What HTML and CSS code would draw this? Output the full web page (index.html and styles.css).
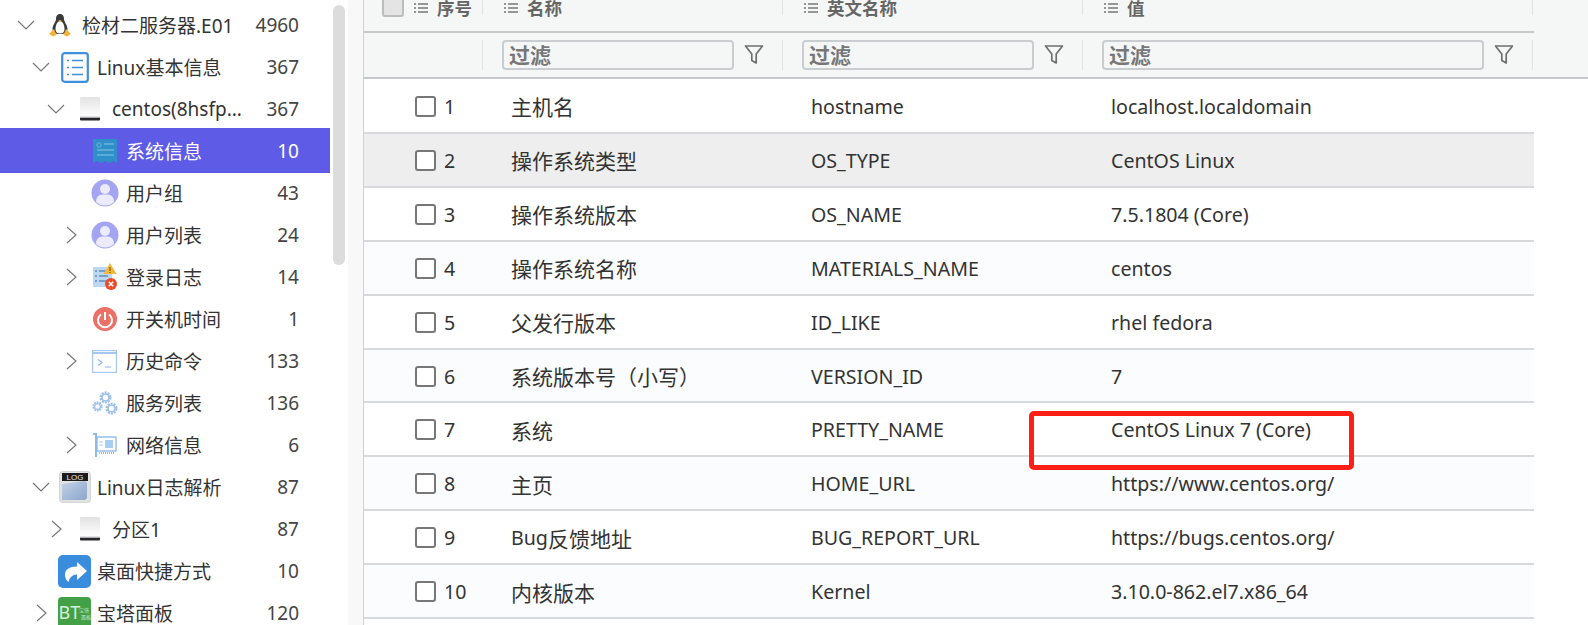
FILE: index.html
```html
<!DOCTYPE html>
<html>
<head>
<title>系统信息</title>
<link rel="stylesheet" href="styles.css">
</head>
<body>
<svg class="sprite" width="0" height="0">
  <defs>
    <linearGradient id="diskFace" x1="0" y1="0" x2="0" y2="1">
      <stop offset="0" stop-color="#e2e2e2"/>
      <stop offset="0.7" stop-color="#f8f8f8"/>
      <stop offset="1" stop-color="#ffffff"/>
    </linearGradient>
    <linearGradient id="logFolder" x1="0" y1="0" x2="1" y2="1">
      <stop offset="0" stop-color="#c3d2e8"/>
      <stop offset="1" stop-color="#8ca6cc"/>
    </linearGradient>
    <symbol id="i-disk" viewBox="0 0 22 24">
      <path d="M2 0h18l1 1v20H1V1z" fill="url(#diskFace)"/>
      <path d="M1 20.500h20v2q0 1-1 1H2q-1 0-1-1z" fill="#26262b"/>
      <path d="M1 19.500h20v1H1z" fill="#c9c9cf"/>
    </symbol>
    <symbol id="i-user" viewBox="0 0 28 28">
      <circle cx="14" cy="14" r="13.500" fill="#a3a5f2"/>
      <circle cx="14" cy="10" r="5" fill="#ebebfb"/>
      <path d="M5 23q0-7 6-7.500h6q6 .5 6 7.500q-4 3.500-9 3.500t-9-3.500z" fill="#ebebfb"/>
    </symbol>
    <symbol id="i-chev-d" viewBox="0 0 18 10">
      <path d="M1 1l8 8 8-8" fill="none" stroke="#777" stroke-width="1.200"/>
    </symbol>
    <symbol id="i-chev-r" viewBox="0 0 11 18">
      <path d="M1 1l9 8-9 8" fill="none" stroke="#777" stroke-width="1.200"/>
    </symbol>
    <symbol id="i-funnel" viewBox="0 0 20 22">
      <path d="M1.500 2h17l-6.300 8v9l-4.400-2.500V10z" fill="none" stroke="#6f6f6f" stroke-width="1.700" stroke-linejoin="round"/>
    </symbol>
    <symbol id="i-lines" viewBox="0 0 14 10">
      <path d="M0 1h2M4 1h10M0 5h2M4 5h10M0 9h2M4 9h10" stroke="#777" stroke-width="1.400"/>
    </symbol>
    <symbol id="i-gear" viewBox="0 0 14 14">
      <circle cx="7" cy="7" r="5.200" fill="none" stroke="currentColor" stroke-width="2.600" stroke-dasharray="2.200 1.070"/>
      <circle cx="7" cy="7" r="3.600" fill="none" stroke="currentColor" stroke-width="1.500"/>
    </symbol>
  </defs>
</svg>

<div class="app">
  <div class="tree">
    <div class="tree-row lv0">
      <span class="twist"><svg class="chev-d"><use href="#i-chev-d"/></svg></span>
      <span class="node-icon">
        <svg width="22" height="24" viewBox="0 0 22 24">
          <path d="M11 1c-3 0-4 2.500-4 5 0 3-3.500 6-3.500 10 0 3 2 5 7.500 5s7.500-2 7.500-5c0-4-3.500-7-3.500-10 0-2.500-1-5-4-5z" fill="#3a3a3a"/>
          <path d="M11 8c-2.500 0-4.500 4-4.500 8 0 3 1.500 4.500 4.500 4.500s4.500-1.500 4.500-4.500c0-4-2-8-4.500-8z" fill="#fff"/>
          <path d="M9.300 7.200h3.400L11 9.200z" fill="#f5b335"/>
          <path d="M0 21l5-5 2.500 6-3.500 1.500zM22 21l-5-5-2.500 6 3.500 1.500z" fill="#f5b335"/>
        </svg>
      </span>
      <span class="label">检材二服务器.E01</span>
      <span class="count">4960</span>
    </div>
    <div class="tree-row lv1">
      <span class="twist"><svg class="chev-d"><use href="#i-chev-d"/></svg></span>
      <span class="node-icon">
        <svg width="28" height="31" viewBox="0 0 28 31">
          <rect x="1.200" y="1.200" width="25.600" height="28.600" rx="2.500" fill="#fff" stroke="#3f8fdc" stroke-width="2.200"/>
          <path d="M6 8.500h2M11 8.500h11M6 15.500h2M11 15.500h11M6 22.500h2M11 22.500h11" stroke="#3f8fdc" stroke-width="1.600"/>
        </svg>
      </span>
      <span class="label">Linux基本信息</span>
      <span class="count">367</span>
    </div>
    <div class="tree-row lv2">
      <span class="twist"><svg class="chev-d"><use href="#i-chev-d"/></svg></span>
      <span class="node-icon"><svg width="22" height="24"><use href="#i-disk"/></svg></span>
      <span class="label">centos(8hsfp...</span>
      <span class="count">367</span>
    </div>
    <div class="tree-row lv3 active">
      <span class="twist"></span>
      <span class="node-icon">
        <svg width="24" height="24" viewBox="0 0 24 24">
          <path d="M0 0h24v24l-4-2-4 2-4-2-4 2-4-2-4 2z" fill="#2f8fc9"/>
          <circle cx="6" cy="6" r="2.200" fill="none" stroke="#6fb4dc" stroke-width="1"/>
          <path d="M11 5h10M4 11h17M4 16h17" stroke="#6fb4dc" stroke-width="1.400"/>
        </svg>
      </span>
      <span class="label">系统信息</span>
      <span class="count">10</span>
    </div>
    <div class="tree-row lv3">
      <span class="twist"></span>
      <span class="node-icon"><svg width="28" height="28"><use href="#i-user"/></svg></span>
      <span class="label">用户组</span>
      <span class="count">43</span>
    </div>
    <div class="tree-row lv3">
      <span class="twist"><svg class="chev-r"><use href="#i-chev-r"/></svg></span>
      <span class="node-icon"><svg width="28" height="28"><use href="#i-user"/></svg></span>
      <span class="label">用户列表</span>
      <span class="count">24</span>
    </div>
    <div class="tree-row lv3">
      <span class="twist"><svg class="chev-r"><use href="#i-chev-r"/></svg></span>
      <span class="node-icon">
        <svg width="26" height="28" viewBox="0 0 26 28">
          <rect x="1" y="4" width="19" height="20" fill="#bcd8f3"/>
          <path d="M3 8h2M7 8h11M3 13h2M7 13h9M3 18h2M7 18h8" stroke="#5d8fc4" stroke-width="1.400"/>
          <path d="M18 0l6.500 11h-13z" fill="#f6b73c"/>
          <path d="M18 4v4M18 9v1" stroke="#7a5a10" stroke-width="1.200"/>
          <circle cx="19" cy="21" r="6" fill="#ea4a2a"/>
          <path d="M16.800 18.800l4.400 4.400M21.200 18.800l-4.400 4.400" stroke="#fff" stroke-width="1.500"/>
        </svg>
      </span>
      <span class="label">登录日志</span>
      <span class="count">14</span>
    </div>
    <div class="tree-row lv3">
      <span class="twist"></span>
      <span class="node-icon">
        <svg width="24" height="24" viewBox="0 0 24 24">
          <circle cx="12" cy="12" r="12" fill="#ec6f68"/>
          <path d="M8 7.500a7 7 0 1 0 8 0" fill="none" stroke="#fff" stroke-width="2"/>
          <path d="M12 5v8" stroke="#fff" stroke-width="2"/>
        </svg>
      </span>
      <span class="label">开关机时间</span>
      <span class="count">1</span>
    </div>
    <div class="tree-row lv3">
      <span class="twist"><svg class="chev-r"><use href="#i-chev-r"/></svg></span>
      <span class="node-icon">
        <svg width="25" height="23" viewBox="0 0 25 23">
          <rect x="0.600" y="0.600" width="23.800" height="21.800" fill="#fff" stroke="#a6c8ee" stroke-width="1.200"/>
          <path d="M0 3h25" stroke="#a6c8ee" stroke-width="2"/>
          <path d="M6 9.500l4 3-4 3M13 17h6" fill="none" stroke="#8db8e8" stroke-width="1.200"/>
        </svg>
      </span>
      <span class="label">历史命令</span>
      <span class="count">133</span>
    </div>
    <div class="tree-row lv3">
      <span class="twist"></span>
      <span class="node-icon">
        <svg class="gears" width="26" height="25" viewBox="0 0 26 25">
          <use href="#i-gear" x="7" y="0" width="13" height="13"/>
          <use href="#i-gear" x="0" y="10" width="11" height="11"/>
          <use href="#i-gear" x="13" y="11" width="13" height="13"/>
        </svg>
      </span>
      <span class="label">服务列表</span>
      <span class="count">136</span>
    </div>
    <div class="tree-row lv3">
      <span class="twist"><svg class="chev-r"><use href="#i-chev-r"/></svg></span>
      <span class="node-icon">
        <svg width="25" height="25" viewBox="0 0 25 25">
          <path d="M1 1h3v23" fill="none" stroke="#8dbcea" stroke-width="2"/>
          <rect x="5" y="4" width="19" height="14" fill="#fff" stroke="#8dbcea" stroke-width="1.400"/>
          <rect x="13" y="7" width="8" height="8" fill="#a9cdf0"/>
          <path d="M7 9h4M7 12h4" stroke="#a9cdf0" stroke-width="1.200"/>
          <path d="M7 20h15" stroke="#8dbcea" stroke-width="2" stroke-dasharray="1 1"/>
        </svg>
      </span>
      <span class="label">网络信息</span>
      <span class="count">6</span>
    </div>
    <div class="tree-row lv1">
      <span class="twist"><svg class="chev-d"><use href="#i-chev-d"/></svg></span>
      <span class="node-icon">
        <svg width="32" height="32" viewBox="0 0 32 32">
          <rect x="0.500" y="0.500" width="31" height="31" rx="3" fill="#e2e2e2" stroke="#d4d4d4"/>
          <rect x="3" y="2" width="26" height="8" fill="#1c1c1c"/>
          <text x="16" y="9" class="log-text">LOG</text>
          <path d="M3 13l23-3 2 2v15l-2 2H3z" fill="url(#logFolder)"/>
        </svg>
      </span>
      <span class="label">Linux日志解析</span>
      <span class="count">87</span>
    </div>
    <div class="tree-row lv2">
      <span class="twist"><svg class="chev-r"><use href="#i-chev-r"/></svg></span>
      <span class="node-icon"><svg width="22" height="24"><use href="#i-disk"/></svg></span>
      <span class="label">分区1</span>
      <span class="count">87</span>
    </div>
    <div class="tree-row lv1">
      <span class="twist"></span>
      <span class="node-icon">
        <svg width="33" height="33" viewBox="0 0 33 33">
          <rect width="33" height="33" rx="5" fill="#3a8cdc"/>
          <path d="M19 7l10 9-10 9v-5.500c-4 0-7 2-8.500 7.500-2.500-2-3.500-4.500-3.500-7.500 0-5 4.500-8 12-8z" fill="#fff"/>
        </svg>
      </span>
      <span class="label">桌面快捷方式</span>
      <span class="count">10</span>
    </div>
    <div class="tree-row lv1">
      <span class="twist"><svg class="chev-r"><use href="#i-chev-r"/></svg></span>
      <span class="node-icon">
        <svg width="33" height="33" viewBox="0 0 33 33">
          <rect width="33" height="33" rx="4" fill="#43a047"/>
          <text x="0.500" y="22" class="bt-text">BT</text>
          <text x="21" y="15" class="bt-small">宝塔</text>
          <text x="23" y="22" class="bt-small">面板</text>
        </svg>
      </span>
      <span class="label">宝塔面板</span>
      <span class="count">120</span>
    </div>
    <div class="scroll-thumb"></div>
  </div>

  <div class="gutter"></div>

  <div class="grid">
    <div class="grid-head">
      <div class="col head-cell first">
        <span class="check check-head"></span>
        <svg class="lines"><use href="#i-lines"/></svg>
        <span>序号</span>
      </div>
      <div class="col head-cell"><svg class="lines"><use href="#i-lines"/></svg><span>名称</span></div>
      <div class="col head-cell"><svg class="lines"><use href="#i-lines"/></svg><span>英文名称</span></div>
      <div class="col head-cell"><svg class="lines"><use href="#i-lines"/></svg><span>值</span></div>
    </div>
    <div class="grid-filter">
      <div class="col filter-cell first"></div>
      <div class="col filter-cell">
        <div class="filter-box">过滤</div>
        <svg class="funnel"><use href="#i-funnel"/></svg>
      </div>
      <div class="col filter-cell">
        <div class="filter-box">过滤</div>
        <svg class="funnel"><use href="#i-funnel"/></svg>
      </div>
      <div class="col filter-cell">
        <div class="filter-box">过滤</div>
        <svg class="funnel"><use href="#i-funnel"/></svg>
      </div>
    </div>

    <div class="grid-row first-row">
      <div class="cell num"><span class="check"></span>1</div>
      <div class="cell zh">主机名</div>
      <div class="cell">hostname</div>
      <div class="cell">localhost.localdomain</div>
    </div>
    <div class="grid-row hover">
      <div class="cell num"><span class="check"></span>2</div>
      <div class="cell zh">操作系统类型</div>
      <div class="cell">OS_TYPE</div>
      <div class="cell">CentOS Linux</div>
    </div>
    <div class="grid-row">
      <div class="cell num"><span class="check"></span>3</div>
      <div class="cell zh">操作系统版本</div>
      <div class="cell">OS_NAME</div>
      <div class="cell">7.5.1804 (Core)</div>
    </div>
    <div class="grid-row even">
      <div class="cell num"><span class="check"></span>4</div>
      <div class="cell zh">操作系统名称</div>
      <div class="cell">MATERIALS_NAME</div>
      <div class="cell">centos</div>
    </div>
    <div class="grid-row">
      <div class="cell num"><span class="check"></span>5</div>
      <div class="cell zh">父发行版本</div>
      <div class="cell">ID_LIKE</div>
      <div class="cell">rhel fedora</div>
    </div>
    <div class="grid-row even">
      <div class="cell num"><span class="check"></span>6</div>
      <div class="cell zh">系统版本号（小写）</div>
      <div class="cell">VERSION_ID</div>
      <div class="cell">7</div>
    </div>
    <div class="grid-row">
      <div class="cell num"><span class="check"></span>7</div>
      <div class="cell zh">系统</div>
      <div class="cell">PRETTY_NAME</div>
      <div class="cell">CentOS Linux 7 (Core)</div>
    </div>
    <div class="grid-row even">
      <div class="cell num"><span class="check"></span>8</div>
      <div class="cell zh">主页</div>
      <div class="cell">HOME_URL</div>
      <div class="cell">https://www.centos.org/</div>
    </div>
    <div class="grid-row">
      <div class="cell num"><span class="check"></span>9</div>
      <div class="cell">Bug<span class="zh">反馈地址</span></div>
      <div class="cell">BUG_REPORT_URL</div>
      <div class="cell">https://bugs.centos.org/</div>
    </div>
    <div class="grid-row even">
      <div class="cell num"><span class="check"></span>10</div>
      <div class="cell zh">内核版本</div>
      <div class="cell">Kernel</div>
      <div class="cell">3.10.0-862.el7.x86_64</div>
    </div>

    <div class="red-mark"></div>
  </div>
</div>
</body>
</html>
```

FILE: styles.css
```css
* {
  box-sizing: border-box;
}

html, body {
  margin: 0;
  padding: 0;
  height: 625px;
  overflow: hidden;
  background-color: #fff;
}

body {
  font-family: "Noto Sans", "Noto Sans CJK SC", sans-serif;
  color: #333;
}

.sprite {
  position: absolute;
}

.app {
  display: flex;
  height: 625px;
}

/* left tree */
.tree {
  position: relative;
  width: 348px;
  padding-top: 4px;
  flex-shrink: 0;
}

.tree-row {
  display: flex;
  align-items: center;
  width: 330px;
  height: 42px;
  padding-right: 31px;
  font-size: 19px;
}

.lv0 { padding-left: 11px; }
.lv1 { padding-left: 26px; }
.lv2 { padding-left: 41px; }
.lv3 { padding-left: 56px; }

.tree-row.active {
  height: 45px;
  margin: -2px 0 -1px;
  background-color: #5e5ce6;
  color: #fff;
}

.twist {
  display: flex;
  align-items: center;
  justify-content: center;
  width: 30px;
  flex-shrink: 0;
}

.chev-d {
  width: 18px;
  height: 10px;
}

.chev-r {
  width: 11px;
  height: 18px;
}

.node-icon {
  display: flex;
  align-items: center;
  justify-content: center;
  width: 37px;
  margin-right: 4px;
  flex-shrink: 0;
}

.lv3 .node-icon {
  margin-right: 3px;
}

.gears {
  color: #9dbfe9;
}

.label {
  flex: 1;
  white-space: nowrap;
}

.count {
  color: #444;
}

.active .count {
  color: #fff;
}

.log-text {
  font-family: "Liberation Sans", sans-serif;
  font-size: 8px;
  fill: #e6e6e6;
  text-anchor: middle;
}

.bt-text {
  font-family: "Noto Sans", sans-serif;
  font-size: 18px;
  fill: #d9f0da;
}

.bt-small {
  font-family: "Noto Sans CJK SC", sans-serif;
  font-size: 5px;
  fill: #cfe8d0;
}

.scroll-thumb {
  position: absolute;
  left: 333px;
  top: 5px;
  width: 12px;
  height: 260px;
  border-radius: 6px;
  background-color: #dcdcdc;
}

.gutter {
  width: 15px;
  background-color: #f8f8f8;
  flex-shrink: 0;
}

/* right table */
.grid {
  position: relative;
  flex: 1;
  border-left: 1px solid #cfd2d4;
}

.grid-head,
.grid-filter,
.grid-row {
  display: grid;
  grid-template-columns: 119px 300px 300px 450px;
}

.grid-head {
  height: 33px;
  background-color: #f5f7f7;
  background-image: linear-gradient(#c6cacc, #c6cacc);
  background-size: 1170px 2px;
  background-position: left bottom;
  background-repeat: no-repeat;
}

.head-cell {
  display: flex;
  align-items: center;
  gap: 9px;
  height: 15px;
  padding-left: 21px;
  border-right: 1px solid #dfe2e3;
  font-size: 17.500px;
  font-weight: bold;
  color: #666;
}

.head-cell.first {
  padding-left: 18px;
  gap: 0;
}

.head-cell.first .lines {
  margin: 0 9px 0 10px;
}

.lines {
  width: 14px;
  height: 10px;
}

.grid-filter {
  height: 46px;
  padding-top: 7px;
  background-color: #f5f7f7;
  border-bottom: 2px solid #c3c8cb;
}

.filter-cell {
  display: flex;
  align-items: flex-start;
  gap: 10px;
  height: 30px;
  padding: 0 18px 0 19px;
  border-right: 1px solid #dfe2e3;
}

.filter-box {
  flex: 1;
  height: 30px;
  padding-left: 5px;
  border: 2px solid #c9cdcf;
  border-radius: 4px;
  font-size: 21px;
  font-weight: bold;
  line-height: 27px;
  color: #777;
}

.funnel {
  width: 20px;
  height: 22px;
  margin-top: 4px;
  flex-shrink: 0;
}

.grid-row {
  width: 1170px;
  height: 53.900px;
  border-bottom: 2px solid #d8d9dc;
  font-size: 19.600px;
  color: #333;
}

.first-row {
  height: 55px;
}

.grid-row.even {
  background-color: #fbfcfe;
}

.grid-row.hover {
  background-color: #eeeeee;
}

.cell {
  display: flex;
  align-items: center;
  padding: 1px 0 0 28px;
  white-space: nowrap;
}

.cell.zh {
  font-size: 21px;
}

span.zh {
  font-size: 21px;
}

.cell.num {
  padding-left: 51px;
}

.check {
  display: inline-block;
  width: 21px;
  height: 21px;
  margin-right: 8px;
  border: 2px solid #777;
  border-radius: 3px;
  background-color: #fff;
}

.check-head {
  width: 22px;
  height: 22px;
  margin: -3px 0 0;
  border-color: #bdbdbd;
  background-color: #e4e4e4;
  flex-shrink: 0;
}

/* annotation drawn on the screenshot */
.red-mark {
  position: absolute;
  left: 665px;
  top: 411px;
  width: 325px;
  height: 59px;
  border: 5px solid #ff2015;
  border-radius: 5px;
}
```
